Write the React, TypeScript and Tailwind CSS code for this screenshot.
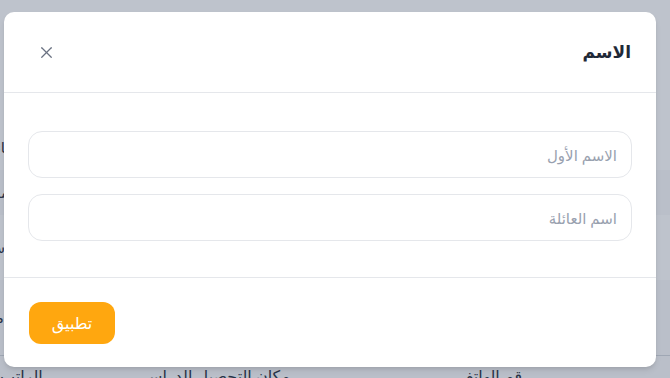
import { X } from "lucide-react";

function Background() {
  return (
    <div className="absolute inset-0 flex flex-col bg-white" dir="rtl">
      <div className="h-[125px] shrink-0"></div>
      <div className="flex flex-col shrink-0 text-[15px] text-gray-800">
        <div className="h-[45px] shrink-0 flex items-center justify-end">
          <span className="-ml-[22px]">بيانات</span>
        </div>
        <div className="h-[45px] shrink-0 flex items-center justify-end bg-gray-50">
          <span className="-ml-[20px]">محل</span>
        </div>
        <div className="h-[65px] shrink-0 flex items-center justify-end">
          <span className="-ml-[20px]">سنة</span>
        </div>
        <div className="h-[75px] shrink-0 flex items-center justify-end bg-gray-50">
          <span className="-ml-[20px]">مدة</span>
        </div>
        <div className="h-[40px] shrink-0 flex items-start pt-[8px] border-t border-gray-300 text-[16px] bg-gray-50">
          <div className="w-[200px] shrink-0 pr-[140px] whitespace-nowrap">رقم الهاتف</div>
          <div className="w-[180px] shrink-0"></div>
          <div className="w-[170px] shrink-0 whitespace-nowrap">مكان التحصيل الدراسي</div>
          <div className="grow text-left">الراتب</div>
        </div>
      </div>
    </div>
  );
}

function App() {
  return (
    <div
      className="relative h-[378px] w-[670px] overflow-hidden"
      style={{ fontFamily: '"Noto Sans", "DejaVu Sans", sans-serif' }}
    >
      <Background />
      <div className="absolute inset-0 bg-[#3a4a63]/33 flex items-start pl-[4px] pt-[12px]">
        <div
          dir="rtl"
          className="w-[652px] h-[355px] bg-white rounded-[10px] shadow-md flex flex-col"
        >
          <div className="h-[81px] flex items-center justify-between pr-[25px] pl-[33px] border-b border-gray-200">
            <h2 className="text-[17px] font-semibold text-[#1f2937]">الاسم</h2>
            <button className="text-gray-500">
              <X size={19} strokeWidth={1.6} />
            </button>
          </div>
          <div className="flex flex-col gap-[16px] px-[24px] pt-[38px] pb-[36px] border-b border-gray-200">
            <input
              placeholder="الاسم الأول"
              className="h-[47px] w-full rounded-[14px] border border-gray-200 px-[14px] text-[15px] placeholder:text-gray-400 outline-none"
            />
            <input
              placeholder="اسم العائلة"
              className="h-[47px] w-full rounded-[14px] border border-gray-200 px-[14px] text-[15px] placeholder:text-gray-400 outline-none"
            />
          </div>
          <div className="flex justify-end px-[25px] pt-[24px]">
            <button className="h-[42px] w-[86px] rounded-[12px] bg-[#ffa70f] text-white text-[16px]">
              تطبيق
            </button>
          </div>
        </div>
      </div>
    </div>
  );
}

export default App;
